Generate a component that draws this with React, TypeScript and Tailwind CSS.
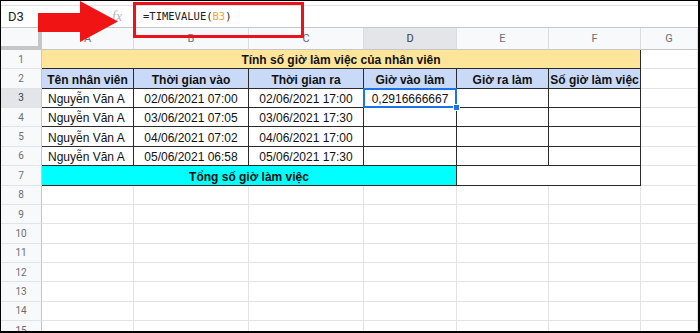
import React from "react";

const GRID = "grid grid-cols-[41px_92px_115px_115px_93px_92px_92px_57px]";
const ROW_H = "h-[19.36px]";
const CELL =
  "h-full min-w-0 flex items-end overflow-hidden whitespace-nowrap border-r border-b px-[3px] pb-[1px] text-[12px] leading-[14px] text-[#111]";
const DARK = "border-[#2a2a2a]";
const LIGHT = "border-[#e2e3e3]";

function RowHead({ n, active }: { n: number; active?: boolean }) {
  return (
    <div
      className={
        "h-full flex items-center justify-center border-r border-b border-r-[#c4c7c5] border-b-[#e2e3e3] text-[10px] font-[Roboto,sans-serif] " +
        (active ? "bg-[#e3e5e8] text-[#3c4043]" : "bg-[#f8f9fa] text-[#6b6f73]")
      }
    >
      {n}
    </div>
  );
}

function GCell() {
  return <div className={CELL + " " + LIGHT} />;
}

const people = [
  ["02/06/2021 07:00", "02/06/2021 17:00"],
  ["03/06/2021 07:05", "03/06/2021 17:30"],
  ["04/06/2021 07:02", "04/06/2021 17:00"],
  ["05/06/2021 06:58", "05/06/2021 17:30"],
];

export default function App() {
  return (
    <div className="relative w-[700px] h-[333px] overflow-hidden bg-white border-t border-l border-r-2 border-b-2 border-black font-['Liberation_Sans',Arial,sans-serif]">
      {/* top strip */}
      <div className="h-[5px] border-b border-[#e0e0e0]" />
      {/* formula bar */}
      <div className="h-[22px] flex items-center border-b border-[#c7c7c7]">
        <div className="w-[109px] pl-[7px] text-[13px] text-[#202124] font-[Roboto,Arial,sans-serif]">D3</div>
        <div className="w-[33px] pl-[2px] text-[14px] italic text-[#b5b5b5] font-['Liberation_Serif',serif]">fx</div>
        <div className="text-[10.5px] text-[#202124] font-['DejaVu_Sans_Mono',monospace] whitespace-nowrap">
          =TIMEVALUE(<span className="text-[#e8a33d]">B3</span>)
        </div>
      </div>
      {/* column headers */}
      <div className={GRID + " h-[22px]"}>
        <div className="h-full bg-[#f8f9fa] border-r-4 border-b-4 border-[#c4c7c5]" />
        {["A", "B", "C", "D", "E", "F", "G"].map((c) => (
          <div
            key={c}
            className={
              "h-full flex items-center justify-center pt-[2px] border-r border-b border-r-[#dadce0] border-b-[#c4c7c5] text-[11px] font-[Roboto,sans-serif] " +
              (c === "D" ? "bg-[#e3e5e8] text-[#3c4043]" : "bg-[#f8f9fa] text-[#6b6f73]")
            }
          >
            {c}
          </div>
        ))}
      </div>

      {/* row 1 */}
      <div className={GRID + " " + ROW_H}>
        <RowHead n={1} />
        <div className={CELL + " " + DARK + " col-span-6 justify-center font-bold bg-[#ffe599]"}>
          Tính số giờ làm việc của nhân viên
        </div>
        <GCell />
      </div>
      {/* row 2 */}
      <div className={GRID + " " + ROW_H}>
        <RowHead n={2} />
        {["Tên nhân viên", "Thời gian vào", "Thời gian ra", "Giờ vào làm", "Giờ ra làm", "Số giờ làm việc"].map((t) => (
          <div key={t} className={CELL + " " + DARK + " justify-center font-bold bg-[#c9daf8]"}>
            {t}
          </div>
        ))}
        <GCell />
      </div>
      {/* rows 3-6 */}
      {people.map((p, i) => (
        <div key={i} className={GRID + " " + ROW_H}>
          <RowHead n={i + 3} active={i === 0} />
          <div className={CELL + " " + DARK + " pl-[6px]"}>Nguyễn Văn A</div>
          <div className={CELL + " " + DARK + " justify-center"}>{p[0]}</div>
          <div className={CELL + " " + DARK + " justify-center"}>{p[1]}</div>
          <div className={CELL + " " + DARK + " justify-center relative overflow-visible"}>
            {i === 0 ? "0,2916666667" : ""}
            {i === 0 && (
              <div className="absolute z-10 left-[-1px] top-[-1px] right-[-1px] bottom-[-1px] border-2 border-[#1a73e8]">
                <div className="absolute right-[-5px] bottom-[-5px] w-[7px] h-[7px] bg-[#1a73e8] border border-white" />
              </div>
            )}
          </div>
          <div className={CELL + " " + DARK} />
          <div className={CELL + " " + DARK} />
          <GCell />
        </div>
      ))}
      {/* row 7 */}
      <div className={GRID + " " + ROW_H}>
        <RowHead n={7} />
        <div className={CELL + " " + DARK + " col-span-4 justify-center font-bold bg-[#00ffff]"}>
          Tổng số giờ làm việc
        </div>
        <div className={CELL + " " + DARK + " col-span-2"} />
        <GCell />
      </div>
      {/* rows 8-15 */}
      {[8, 9, 10, 11, 12, 13, 14, 15].map((n) => (
        <div key={n} className={GRID + " " + ROW_H}>
          <RowHead n={n} />
          <GCell />
          <GCell />
          <GCell />
          <GCell />
          <GCell />
          <GCell />
          <GCell />
        </div>
      ))}

      {/* red highlight box */}
      <div className="absolute z-20 left-[132px] top-[1px] w-[171px] h-[36px] border-[3px] border-[#e8131b]" />
      {/* red arrow */}
      <svg className="absolute z-20 left-[-1px] top-[-1px]" width="130" height="46" viewBox="0 0 130 46">
        <polygon points="38,13 80,13 80,1 118,21.5 80,42 80,32 38,32" fill="#f01414" />
      </svg>
    </div>
  );
}
